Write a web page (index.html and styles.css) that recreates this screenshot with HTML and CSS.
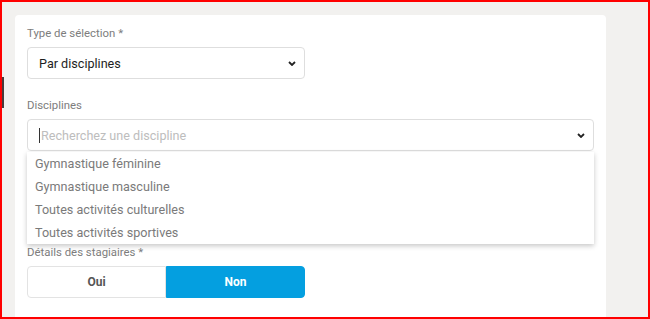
FILE: index.html
```html
<!DOCTYPE html>
<html lang="fr">
<head>
    <meta charset="UTF-8">
    <title>Sélection</title>
    <link rel="stylesheet" href="styles.css">
</head>
<body>
    <div class="frame">
        <div class="side-tab"></div>
        <div class="card">
            <div class="field">
                <label class="label">Type de sélection *</label>
                <div class="select short">
                    <span class="value">Par disciplines</span>
                    <svg class="chevron" width="8" height="5" viewBox="0 0 8 5"><path d="M1 1l3 3 3-3" fill="none" stroke="#222" stroke-width="1.8"/></svg>
                </div>
            </div>

            <div class="field disciplines">
                <label class="label">Disciplines</label>
                <div class="select">
                    <span class="caret"></span>
                    <span class="placeholder">Recherchez une discipline</span>
                    <svg class="chevron" width="8" height="5" viewBox="0 0 8 5"><path d="M1 1l3 3 3-3" fill="none" stroke="#222" stroke-width="1.8"/></svg>
                </div>
                <ul class="dropdown">
                    <li>Gymnastique féminine</li>
                    <li>Gymnastique masculine</li>
                    <li>Toutes activités culturelles</li>
                    <li>Toutes activités sportives</li>
                </ul>
            </div>

            <div class="field">
                <label class="label">Détails des stagiaires *</label>
                <div class="toggle">
                    <button class="opt">Oui</button>
                    <button class="opt active">Non</button>
                </div>
            </div>
        </div>
    </div>
</body>
</html>
```

FILE: styles.css
```css
body {
    margin: 0;
    font-family: Roboto, "Liberation Sans", sans-serif;
}
.frame {
    position: relative;
    box-sizing: border-box;
    height: 319px;
    border: 2px solid #ff0000;
    background: #f2f1ef;
    padding: 13px 0 0 13px;
    overflow: hidden;
}
.side-tab {
    position: absolute;
    left: 0;
    top: 75px;
    width: 2px;
    height: 31px;
    background: #4a3a3a;
}
.card {
    width: 591px;
    height: 320px;
    box-sizing: border-box;
    background: #fff;
    border-radius: 4px 4px 0 0;
    padding: 11px 12px 0 12px;
}
.field {
    position: relative;
}
.label {
    display: block;
    font-size: 11.4px;
    line-height: 14px;
    color: #7d7d7d;
    margin-bottom: 7px;
}
.select {
    display: flex;
    align-items: center;
    box-sizing: border-box;
    height: 32px;
    border: 1px solid #dedede;
    border-radius: 4px;
    padding: 0 8px 0 11px;
}
.select.short {
    width: 278px;
    margin-bottom: 19px;
}
.value {
    font-size: 12.6px;
    color: #1e1e1e;
}
.chevron {
    margin-left: auto;
}
.caret {
    width: 1px;
    height: 15px;
    background: #333;
    margin-right: 1px;
}
.placeholder {
    font-size: 12.6px;
    color: #bdbdbd;
}
.disciplines {
    margin-bottom: 94px;
}
.dropdown {
    position: absolute;
    left: 0;
    right: 0;
    top: 54px;
    margin: 0;
    padding: 0;
    list-style: none;
    background: #fff;
    box-shadow: 0 2px 5px rgba(0, 0, 0, 0.22);
    z-index: 2;
}
.dropdown li {
    height: 23px;
    line-height: 23px;
    padding-left: 8px;
    font-size: 12.6px;
    color: #7a7a7a;
}
.toggle {
    display: flex;
    width: 278px;
    height: 32px;
}
.opt {
    flex: 1;
    border: 1px solid #e3e3e3;
    background: #fff;
    font-family: inherit;
    font-size: 12px;
    font-weight: bold;
    color: #555;
    border-radius: 4px 0 0 4px;
}
.opt.active {
    background: #049fe0;
    border-color: #049fe0;
    color: #fff;
    border-radius: 0 4px 4px 0;
}
```
